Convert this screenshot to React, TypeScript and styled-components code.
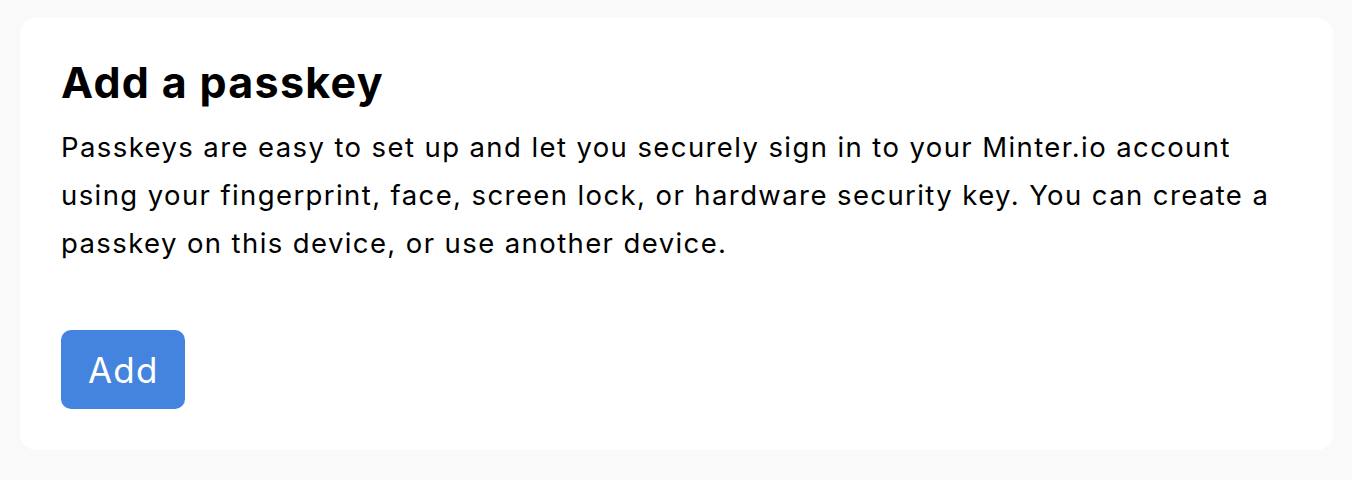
import * as React from 'react';
import styled, { createGlobalStyle } from 'styled-components';

const GlobalStyle = createGlobalStyle`
  html, body {
    margin: 0;
    padding: 0;
    background: #f9f9f9;
    font-family: Inter, "Liberation Sans", sans-serif;
    -webkit-font-smoothing: antialiased;
  }
`;

const Page = styled.div`
  padding: 18px 19px 0 20px;
`;

const Card = styled.section`
  background: #ffffff;
  border-radius: 16px;
  padding: 37px 41px 41px 41px;
`;

const Title = styled.h1`
  margin: 0;
  font-size: 43px;
  line-height: 54px;
  font-weight: 700;
  color: #000;
  letter-spacing: 1.3px;
`;

const Description = styled.p`
  margin: 14px 0 0 0;
  font-size: 27.5px;
  line-height: 48px;
  color: #000;
  letter-spacing: 1.4px;
`;

const Actions = styled.div`
  display: flex;
  margin-top: 63px;
`;

const Button = styled.button`
  display: flex;
  align-items: center;
  justify-content: center;
  height: 79px;
  padding: 0 26px 0 27px;
  border: none;
  border-radius: 10px;
  background: #4484de;
  color: #fff;
  font-family: inherit;
  font-size: 35px;
  letter-spacing: 1.2px;
  cursor: pointer;
`;

const texts = {
  title: 'Add a passkey',
  body:
    'Passkeys are easy to set up and let you securely sign in to your Minter.io account using your fingerprint, face, screen lock, or hardware security key. You can create a passkey on this device, or use another device.',
  add: 'Add'
};

const App = () => (
  <Page>
    <GlobalStyle />
    <Card>
      <Title>{texts.title}</Title>
      <Description>{texts.body}</Description>
      <Actions>
        <Button type="button">{texts.add}</Button>
      </Actions>
    </Card>
  </Page>
);

export default App;
